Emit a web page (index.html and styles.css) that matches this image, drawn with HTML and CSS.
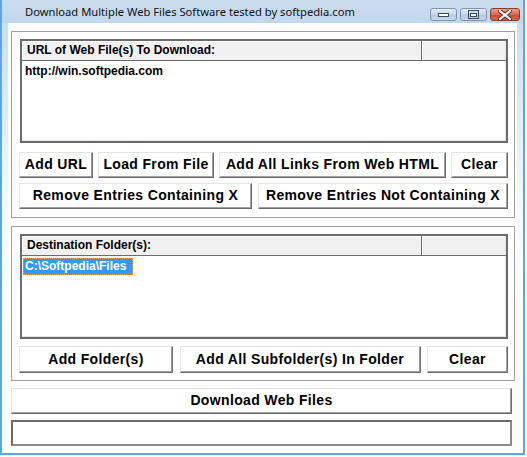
FILE: index.html
```html
<!DOCTYPE html>
<html>
<head>
<meta charset="utf-8">
<link rel="stylesheet" href="styles.css">
</head>
<body>
<div class="window">
  <div class="titlebar">
    <span class="title">Download Multiple Web Files Software tested by softpedia.com</span>
    <div class="caption-btns">
      <div class="cbtn">
        <svg width="13" height="7" viewBox="0 0 13 7"><rect x="1.5" y="2.5" width="10" height="3" fill="#fff" stroke="#3c4b5e"/></svg>
      </div>
      <div class="cbtn">
        <svg width="11" height="9" viewBox="0 0 11 9"><rect x="0.5" y="0.5" width="10" height="8" fill="none" stroke="#3c4b5e"/><rect x="2.5" y="3.5" width="6" height="3" fill="#fff" stroke="#3c4b5e"/></svg>
      </div>
      <div class="cbtn close">
        <svg width="14" height="10" viewBox="0 0 14 10"><path d="M2 1 L12 9 M12 1 L2 9" stroke="#5a2418" stroke-width="4" stroke-linecap="square"/><path d="M2 1 L12 9 M12 1 L2 9" stroke="#fff" stroke-width="2.2" stroke-linecap="square"/></svg>
      </div>
    </div>
  </div>
  <div class="client">
    <div class="group group-urls">
      <div class="listbox list-urls">
        <div class="lhead">
          <div class="hcell hmain">URL of Web File(s) To Download:</div>
          <div class="hcell hrest"></div>
        </div>
        <div class="lrow"><span class="item">http://win.softpedia.com</span></div>
      </div>
      <div class="btnrow row1">
        <div class="btn w-addurl">Add URL</div>
        <div class="btn w-load">Load From File</div>
        <div class="btn w-links">Add All Links From Web HTML</div>
        <div class="btn w-clear1">Clear</div>
      </div>
      <div class="btnrow row2">
        <div class="btn w-rem">Remove Entries Containing X</div>
        <div class="btn w-remnot">Remove Entries Not Containing X</div>
      </div>
    </div>
    <div class="group group-dest">
      <div class="listbox list-dest">
        <div class="lhead">
          <div class="hcell hmain">Destination Folder(s):</div>
          <div class="hcell hrest"></div>
        </div>
        <div class="lrow"><span class="item selected">C:\Softpedia\Files</span></div>
      </div>
      <div class="btnrow row3">
        <div class="btn w-addf">Add Folder(s)</div>
        <div class="btn w-sub">Add All Subfolder(s) In Folder</div>
        <div class="btn w-clear2">Clear</div>
      </div>
    </div>
    <div class="btn download">Download Web Files</div>
    <div class="status"></div>
  </div>
</div>
</body>
</html>
```

FILE: styles.css
```css
html, body {
  margin: 0;
  padding: 0;
  background: #ffffff;
}

.window {
  position: relative;
  width: 525px;
  height: 455px;
  box-sizing: border-box;
  border-left: 2px solid #5aa9dc;
  border-right: 2px solid #5aa9dc;
  border-bottom: 2px solid #5aa9dc;
  background: linear-gradient(#c8daee 0px, #d4e2f1 60px, #f4f8fc 200px, #ffffff 320px);
  display: flex;
  flex-direction: column;
  font-family: "Liberation Sans", Arial, sans-serif;
  font-weight: bold;
  color: #000;
}

.titlebar {
  height: 23px;
  flex: none;
  display: flex;
  align-items: flex-start;
  background: linear-gradient(#cbdcef, #c3d6ec);
  padding-left: 23px;
  padding-right: 2px;
}

.title {
  font-family: "Noto Sans", "Open Sans", sans-serif;
  font-weight: normal;
  font-size: 11.2px;
  line-height: 14px;
  margin-top: 5px;
  color: #111;
  white-space: nowrap;
}

.caption-btns {
  margin-left: auto;
  display: flex;
  gap: 3px;
  margin-top: 8px;
  margin-right: 1px;
}

.cbtn {
  width: 27px;
  height: 13px;
  box-sizing: border-box;
  border: 1px solid #7f93ab;
  border-radius: 3px;
  background: linear-gradient(#e4eef8, #c2d4e8 50%, #b2c7df 51%, #c7d8ea);
  display: flex;
  align-items: center;
  justify-content: center;
}

.cbtn.close {
  width: 30px;
  border-color: #8a3b2c;
  background: linear-gradient(#e9a08c, #d46a52 50%, #c24a32 51%, #d0684c);
}

.client {
  flex: 1;
  margin: 0 6px 6px 6px;
  background: #ffffff;
  padding: 8px 1px 0 3px;
  display: flex;
  flex-direction: column;
}

.group {
  width: 504px;
  box-sizing: border-box;
  border: 1px solid #a0a0a0;
  padding: 7px 6px 0 7px;
  display: flex;
  flex-direction: column;
}

.group-urls {
  height: 187px;
}

.group-dest {
  height: 155px;
  margin-top: 8px;
}

.listbox {
  margin-left: 1px;
  box-sizing: border-box;
  border: 2px solid #6b6b6b;
  box-shadow: inset -1px -1px 0 #e3e3e3;
  background: #ffffff;
}

.list-urls {
  height: 104px;
}

.list-dest {
  height: 105px;
}

.lhead {
  height: 20px;
  box-sizing: border-box;
  display: flex;
  border-bottom: 1px solid #6b6b6b;
  background: #f0f0f0;
}

.hcell {
  box-sizing: border-box;
  height: 19px;
  font-size: 12px;
  line-height: 18px;
  padding-left: 5px;
  box-shadow: inset 1px 1px 0 #ffffff;
  white-space: nowrap;
}

.hmain {
  width: 400px;
  border-right: 1px solid #6b6b6b;
}

.hrest {
  flex: 1;
  border-right: 1px solid #e3e3e3;
}

.lrow {
  height: 17px;
}

.item {
  display: inline-block;
  margin-left: 1px;
  padding: 0 2px 0 1px;
  border: 1px dotted transparent;
  font-size: 12px;
  line-height: 15px;
  white-space: nowrap;
}

.item.selected {
  background: #3399ff;
  color: #ffffff;
  border-color: #e8a050;
  padding-right: 6px;
}

.btnrow {
  display: flex;
  justify-content: space-between;
}

.row1 {
  margin-top: 9px;
}

.row2 {
  margin-top: 5px;
}

.row3 {
  margin-top: 7px;
}

.btn {
  box-sizing: border-box;
  height: 26px;
  background: #ffffff;
  border: 1px solid;
  border-color: #e3e3e3 #6b6b6b #6b6b6b #e3e3e3;
  box-shadow: inset -1px -1px 0 #a0a0a0;
  font-size: 14px;
  letter-spacing: 0.35px;
  line-height: 23px;
  text-align: center;
  white-space: nowrap;
}

.row3 .btn {
  height: 27px;
  line-height: 24px;
}

.w-addurl { width: 74px; }
.w-load { width: 116px; }
.w-links { width: 227px; }
.w-clear1 { width: 57px; }
.w-rem { width: 233px; }
.w-remnot { width: 250px; }
.w-addf { width: 154px; }
.w-sub { width: 241px; }
.w-clear2 { width: 81px; }

.download {
  width: 501px;
  margin-top: 7px;
}

.status {
  width: 501px;
  height: 26px;
  box-sizing: border-box;
  margin-top: 6px;
  border: 2px solid #6b6b6b;
  border-right-color: #8a8a8a;
  border-bottom-color: #8a8a8a;
  background: #ffffff;
}
```
